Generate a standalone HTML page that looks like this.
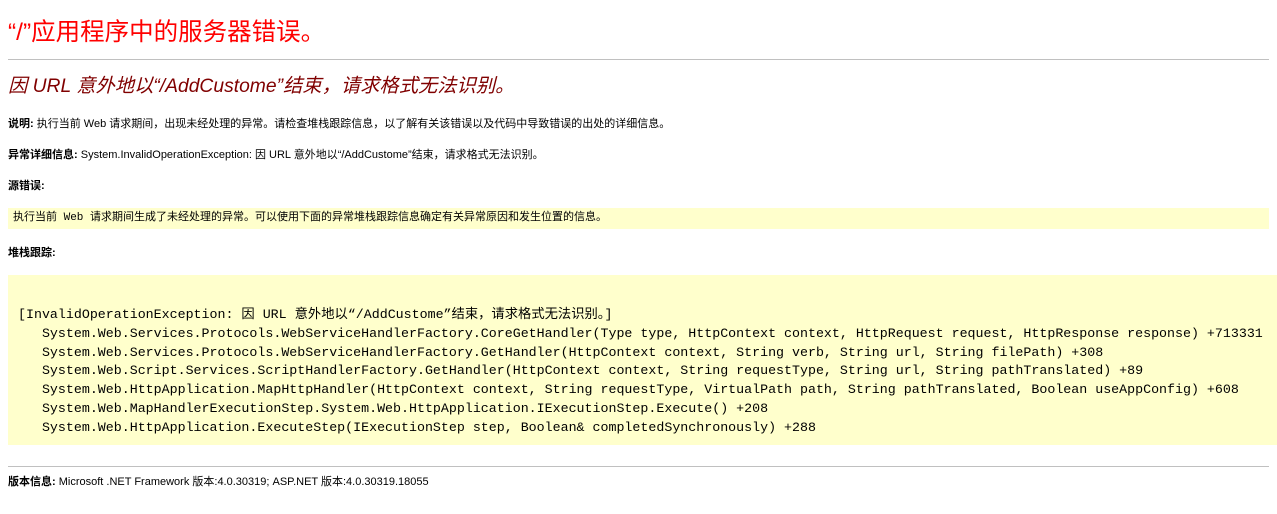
<!DOCTYPE html>
<html><head><meta charset="utf-8"><style>
body{margin:0;background:#fff;width:1277px;height:514px;overflow:hidden;position:relative;font-family:"Liberation Sans","Noto Sans CJK SC",sans-serif;}
.a{position:absolute;white-space:nowrap;}
.h1{left:8px;top:18px;font-size:24.5px;color:#f00;line-height:30px;}
.hr{position:absolute;left:8px;width:1261px;height:1px;background:#c0c0c0;}
.h2{left:8px;top:74px;font-size:19.3px;font-style:italic;color:#800000;line-height:26px;}
.s{left:8px;font-size:11px;color:#000;line-height:14px;}
.s b{font-weight:bold;}
.box1{position:absolute;left:8px;top:208px;width:1261px;height:21px;background:#ffffcc;}
.box1 span{position:absolute;left:5px;top:3px;font-family:"Liberation Mono","Noto Sans CJK SC",monospace;font-size:11px;line-height:14px;}
.box2{position:absolute;left:8px;top:275px;width:1269px;height:170px;background:#ffffcc;}
pre{position:absolute;left:10px;top:31px;margin:0;font-family:"Liberation Mono","Noto Sans CJK SC",monospace;font-size:13.3px;line-height:18.8px;color:#000;}
</style></head><body>
<div class="a h1">“/”应用程序中的服务器错误。</div>
<div class="hr" style="top:59px"></div>
<div class="a h2">因 URL 意外地以“/AddCustome”结束，请求格式无法识别。</div>
<div class="a s" style="top:117px"><b>说明: </b>执行当前 Web 请求期间，出现未经处理的异常。请检查堆栈跟踪信息，以了解有关该错误以及代码中导致错误的出处的详细信息。</div>
<div class="a s" style="top:148px"><b>异常详细信息: </b>System.InvalidOperationException: 因 URL 意外地以“/AddCustome”结束，请求格式无法识别。</div>
<div class="a s" style="top:179px"><b>源错误:</b></div>
<div class="box1"><span>执行当前 Web 请求期间生成了未经处理的异常。可以使用下面的异常堆栈跟踪信息确定有关异常原因和发生位置的信息。</span></div>
<div class="a s" style="top:246px"><b>堆栈跟踪:</b></div>
<div class="box2"><pre>[InvalidOperationException: 因 URL 意外地以“/AddCustome”结束，请求格式无法识别。]
   System.Web.Services.Protocols.WebServiceHandlerFactory.CoreGetHandler(Type type, HttpContext context, HttpRequest request, HttpResponse response) +713331
   System.Web.Services.Protocols.WebServiceHandlerFactory.GetHandler(HttpContext context, String verb, String url, String filePath) +308
   System.Web.Script.Services.ScriptHandlerFactory.GetHandler(HttpContext context, String requestType, String url, String pathTranslated) +89
   System.Web.HttpApplication.MapHttpHandler(HttpContext context, String requestType, VirtualPath path, String pathTranslated, Boolean useAppConfig) +608
   System.Web.MapHandlerExecutionStep.System.Web.HttpApplication.IExecutionStep.Execute() +208
   System.Web.HttpApplication.ExecuteStep(IExecutionStep step, Boolean&amp; completedSynchronously) +288</pre></div>
<div class="hr" style="top:466px"></div>
<div class="a s" style="top:475px"><b>版本信息: </b>Microsoft .NET Framework 版本:4.0.30319; ASP.NET 版本:4.0.30319.18055</div>
</body></html>
